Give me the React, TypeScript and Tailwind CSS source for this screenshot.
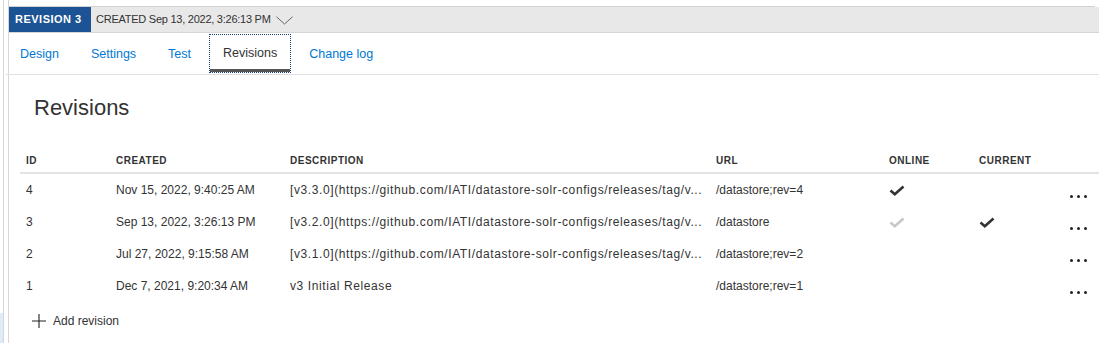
import React from 'react';

type Revision = {
  id: number;
  created: string;
  description: string;
  url: string;
  online: boolean;
  current: boolean;
};

const revisions: Revision[] = [
  { id: 4, created: 'Nov 15, 2022, 9:40:25 AM', description: '[v3.3.0](https://github.com/IATI/datastore-solr-configs/releases/tag/v3.3.0)', url: '/datastore;rev=4', online: true, current: false },
  { id: 3, created: 'Sep 13, 2022, 3:26:13 PM', description: '[v3.2.0](https://github.com/IATI/datastore-solr-configs/releases/tag/v3.2.0)', url: '/datastore', online: false, current: true },
  { id: 2, created: 'Jul 27, 2022, 9:15:58 AM', description: '[v3.1.0](https://github.com/IATI/datastore-solr-configs/releases/tag/v3.1.0)', url: '/datastore;rev=2', online: false, current: false },
  { id: 1, created: 'Dec 7, 2021, 9:20:34 AM', description: 'v3 Initial Release', url: '/datastore;rev=1', online: false, current: false },
];

const tabs = ['Design', 'Settings', 'Test', 'Revisions', 'Change log'];

// the grid cuts long descriptions the way the portal does
const shorten = (s: string) => (s.length > 70 ? s.slice(0, 70) + '...' : s);

const Check = ({ light }: { light?: boolean }) => (
  <svg width="16" height="11" viewBox="0 0 16 11" className={light ? 'text-[#c8c8c8]' : 'text-[#333]'}>
    <path d="M1.5 5.5 L5.8 9.2 L14.5 1.5" fill="none" stroke="currentColor" strokeWidth="2.6" />
  </svg>
);

const Dots = () => (
  <div className="flex items-center gap-[4.5px] mt-[13px]">
    <span className="w-[2.5px] h-[2.5px] rounded-full bg-[#222]" />
    <span className="w-[2.5px] h-[2.5px] rounded-full bg-[#222]" />
    <span className="w-[2.5px] h-[2.5px] rounded-full bg-[#222]" />
  </div>
);

const gridCols = 'grid grid-cols-[90px_174px_426px_173px_90px_89px_1fr]';

export default function App() {
  return (
    <div className="w-[1099px] h-[343px] bg-white flex overflow-hidden text-[#333] font-['Liberation_Sans',Arial,sans-serif]">
      {/* left edge of sidebar */}
      <div className="w-[3px] flex flex-col">
        <div className="h-[313px]" />
        <div className="flex-1 bg-[#deecf9]" />
      </div>
      <div className="w-px bg-[#d6d6d6]" />
      <div className="w-[4px]" />

      <div className="flex-1 min-w-0 border-l border-[#d6d6d6] pt-[6px] flex flex-col">
        <div className="h-px bg-[#d2d2d2] mr-[4px]" />

        {/* revision bar */}
        <div className="h-[26px] bg-[#e8e8e8] border-b border-[#d6d6d6] flex items-stretch">
          <div className="w-[82px] bg-[#1b5394] text-white font-bold text-[11px] tracking-[0.5px] flex items-center pl-[6px]">
            REVISION 3
          </div>
          <div className="flex items-center pl-[5px] text-[11px] tracking-[-0.25px] text-[#333]">
            CREATED Sep 13, 2022, 3:26:13 PM
            <svg width="17" height="9" viewBox="0 0 17 9" className="ml-[5px] mt-[2px]">
              <path d="M0.5 0.8 L8.5 8 L16.5 0.8" fill="none" stroke="#666" strokeWidth="1" />
            </svg>
          </div>
        </div>

        {/* tabs */}
        <div className="h-[42px] border-b border-[#e0e0e0] flex items-start -ml-[3px] gap-[4px]">
          {tabs.map(tab => {
            const active = tab === 'Revisions';
            return (
              <div
                key={tab}
                className={
                  active
                    ? 'h-[39px] mt-[1px] px-[13px] border border-dotted border-[#1d3f75] flex flex-col'
                    : 'h-[39px] mt-[1px] px-[14px] flex flex-col'
                }
              >
                <div className={active ? 'flex-1 flex items-center pt-[3px] text-[12.5px] text-[#333]' : 'flex-1 flex items-center pt-[4px] text-[12.5px] text-[#0078d4]'}>
                  {tab}
                </div>
                <div className={active ? 'h-[3px] bg-[#555] -mx-[13px]' : 'h-[3px]'} />
              </div>
            );
          })}
        </div>

        {/* title */}
        <h1 className="mt-[20px] pl-[25px] text-[22px] leading-[26px] text-[#333]">Revisions</h1>

        {/* table */}
        <div className="ml-[11px] mt-[27px]">
          <div className={`${gridCols} h-[26px] items-center border-b-2 border-[#e3e3e3] text-[10px] font-bold tracking-[0.5px] text-[#333]`}>
            <div className="pl-[6px]">ID</div>
            <div className="pl-[6px]">CREATED</div>
            <div className="pl-[6px]">DESCRIPTION</div>
            <div className="pl-[6px]">URL</div>
            <div className="pl-[6px]">ONLINE</div>
            <div className="pl-[6px]">CURRENT</div>
            <div />
          </div>
          {revisions.map(r => (
            <div key={r.id} className={`${gridCols} h-[32px] items-center text-[12px]`}>
              <div className="pl-[6px]">{r.id}</div>
              <div className="pl-[6px]">{r.created}</div>
              <div className="pl-[6px] pr-[4px] truncate tracking-[0.6px]">{shorten(r.description)}</div>
              <div className="pl-[6px]">{r.url}</div>
              <div className="pl-[6px] flex">{(r.online || r.current) && <Check light={!r.online} />}</div>
              <div className="pl-[6px] flex">{r.current && <Check />}</div>
              <div className="pl-[8px] flex"><Dots /></div>
            </div>
          ))}
        </div>

        {/* add revision */}
        <div className="mt-[4px] h-[30px] pl-[23px] flex items-center gap-[7px] text-[12px] text-[#333]">
          <svg width="14" height="14" viewBox="0 0 14 14">
            <path d="M7 0 V14 M0 7 H14" stroke="#222" strokeWidth="1.1" />
          </svg>
          Add revision
        </div>
      </div>
    </div>
  );
}
